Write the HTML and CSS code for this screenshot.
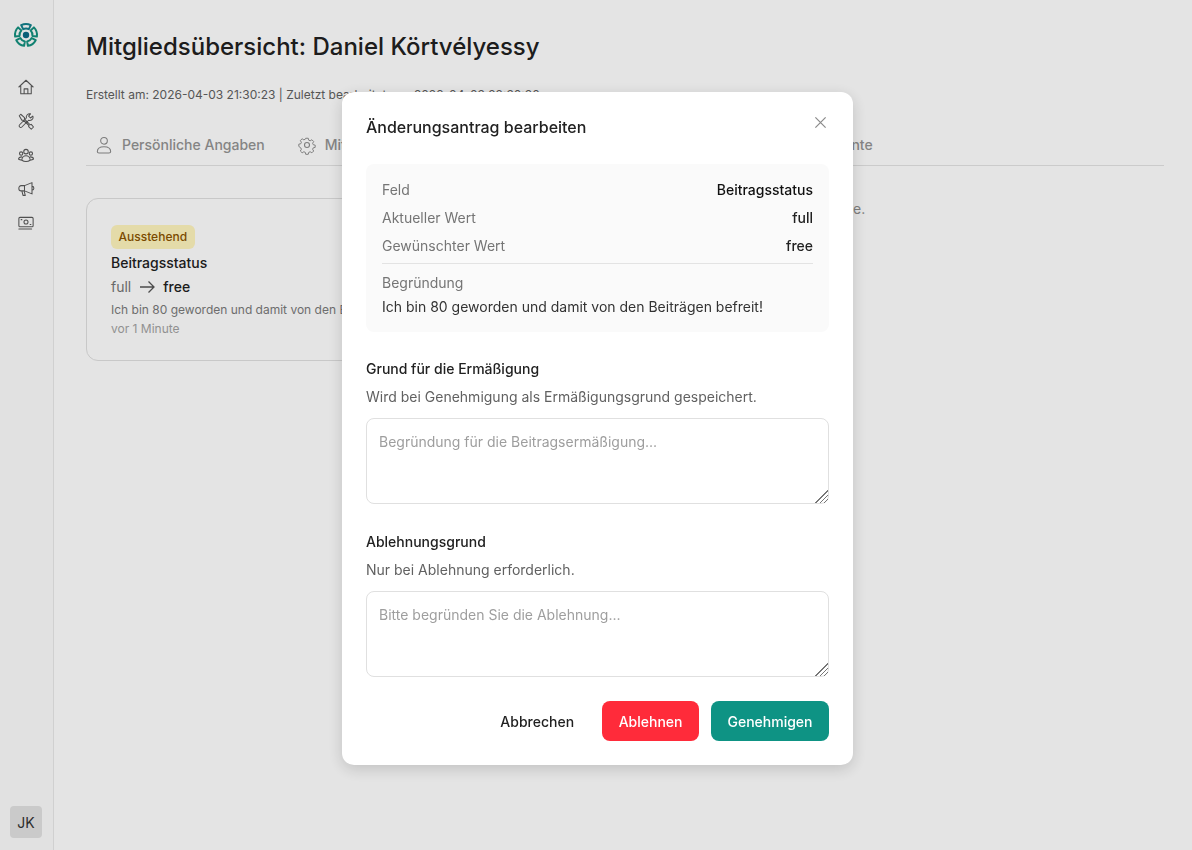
FILE: index.html
```html
<!DOCTYPE html>
<html lang="de">
    <head>
        <meta charset="utf-8">
        <title>Mitgliedsübersicht</title>
        <link rel="stylesheet" href="styles.css">
    </head>
    <body>
        <div class="app">
            <aside class="sidebar">
                <svg class="logo" width="26" height="26" viewBox="0 0 26 26" fill="none">
                    <g stroke="#14917f" stroke-width="2" stroke-linejoin="round">
                        <path stroke="#12808c" d="M8.18 3.11A11 11 0 0 1 17.820 3.110L15.850 7.160A6.500 6.500 0 0 0 10.150 7.160Z"/>
                        <path transform="rotate(72 13 13)" d="M8.18 3.11A11 11 0 0 1 17.820 3.110L15.850 7.160A6.500 6.500 0 0 0 10.150 7.160Z"/>
                        <path transform="rotate(144 13 13)" d="M8.18 3.11A11 11 0 0 1 17.820 3.110L15.850 7.160A6.500 6.500 0 0 0 10.150 7.160Z"/>
                        <path transform="rotate(216 13 13)" d="M8.18 3.11A11 11 0 0 1 17.820 3.110L15.850 7.160A6.500 6.500 0 0 0 10.150 7.160Z"/>
                        <path transform="rotate(288 13 13)" d="M8.18 3.11A11 11 0 0 1 17.820 3.110L15.850 7.160A6.500 6.500 0 0 0 10.150 7.160Z"/>
                    </g>
                    <circle cx="13" cy="13" r="3.200" fill="#0c6a86"/>
                </svg>
                <nav class="side-nav">
                    <a class="side-link" href="#">
                        <svg viewBox="0 0 24 24"><path d="M2.500 12 12 3l9.500 9M5 9.500V21h14V9.500M9.500 21v-6.500h5V21"/></svg>
                    </a>
                    <a class="side-link" href="#">
                        <svg viewBox="0 0 24 24"><path d="M3 5l2-2 5 4.500v2l7.500 7.500 1.500-.5 3 3.500-3 3-3.500-3.500.5-1.500L8.500 11h-2zM21.500 6.500a4.500 4.500 0 0 1-6 4.500L6.500 20a2 2 0 0 1-3-3L12.500 8a4.500 4.500 0 0 1 5.500-5.500L15.500 5.500l2.500 2.500 3-2.500z"/></svg>
                    </a>
                    <a class="side-link" href="#">
                        <svg viewBox="0 0 24 24"><circle cx="12" cy="7.500" r="3"/><circle cx="5.500" cy="10" r="2.200"/><circle cx="18.500" cy="10" r="2.200"/><path d="M6.500 19c0-3.500 2.500-6 5.500-6s5.500 2.500 5.500 6c-3 2-8 2-11 0zM6.500 14.500c-2.500 0-4.500 1-4.500 3 .8.800 2.500 1.300 4.500 1.300M17.500 14.500c2.500 0 4.500 1 4.500 3-.8.800-2.500 1.300-4.500 1.300"/></svg>
                    </a>
                    <a class="side-link" href="#">
                        <svg viewBox="0 0 24 24"><path d="M20 3.500v15L10 14.500H5.500a3 3 0 0 1-3-3v-1a3 3 0 0 1 3-3H10zM10 7.500v7M20 8.500a2.500 2.500 0 0 1 0 5M6.500 14.500l1.500 6h3l-1.500-6"/></svg>
                    </a>
                    <a class="side-link" href="#">
                        <svg viewBox="0 0 24 24"><rect x="2.500" y="4.500" width="19" height="12.500" rx="1.500"/><circle cx="12" cy="10.700" r="2.700"/><path d="M5.500 7.500h1M17.500 14h1M2.500 20h17"/></svg>
                    </a>
                </nav>
                <div class="avatar">JK</div>
            </aside>

            <main class="content">
                <h1 class="page-title">Mitgliedsübersicht: Daniel Körtvélyessy</h1>
                <p class="meta">Erstellt am: 2026-04-03 21:30:23 | Zuletzt bearbeitet am: 2026-04-03 22:30:30</p>

                <div class="tabs">
                    <a class="tab" href="#">
                        <svg viewBox="0 0 24 24"><circle cx="12" cy="7" r="4"/><path d="M4 20c0-4 3.500-6 8-6s8 2 8 6c0 1-1 1.500-2 1.500H6c-1 0-2-.5-2-1.500z"/></svg>
                        Persönliche Angaben
                    </a>
                    <a class="tab" href="#">
                        <svg viewBox="0 0 24 24"><circle cx="12" cy="12" r="3"/><path d="M10.300 3h3.400l.6 2.600 1.900.8 2.300-1.400 2.400 2.400-1.400 2.300.8 1.900 2.600.6v3l-2.600.6-.8 1.900 1.400 2.300-2.400 2.400-2.300-1.400-1.900.8-.6 2.600h-3.400l-.6-2.600-1.900-.8-2.300 1.400-2.400-2.400 1.400-2.300-.8-1.900L1.100 13.900v-3l2.600-.6.8-1.900L3.100 6.100l2.400-2.400 2.300 1.400 1.900-.8z" transform="translate(12 12) scale(.9) translate(-12 -12)"/></svg>
                        Mitgliedschaft
                    </a>
                    <a class="tab" href="#">
                        <svg viewBox="0 0 24 24"><rect x="3" y="6" width="18" height="13" rx="2"/><path d="M3 10h18"/></svg>
                        Zahlungen
                    </a>
                    <a class="tab" href="#">
                        <svg viewBox="0 0 24 24"><path d="M5 3h14v18H5zM9 8h6M9 12h6"/></svg>
                        Änderungsanträge
                    </a>
                    <a class="tab" href="#">
                        <svg viewBox="0 0 24 24"><path d="M6 3h8l4 4v14H6z"/></svg>
                        Dokumente
                    </a>
                </div>

                <div class="requests">
                    <section class="request-card">
                        <span class="badge">Ausstehend</span>
                        <h2 class="request-field">Beitragsstatus</h2>
                        <div class="request-change">
                            <span class="old-value">full</span>
                            <svg class="arrow" viewBox="0 0 16 16"><path d="M1 8h14M9.500 2.500 15 8l-5.500 5.500"/></svg>
                            <span>free</span>
                        </div>
                        <p class="request-reason">Ich bin 80 geworden und damit von den Beiträgen befreit!</p>
                        <p class="request-time">vor 1 Minute</p>
                    </section>
                    <p class="request-note">Keine weiteren offenen Änderungsanträge.</p>
                </div>
            </main>
        </div>

        <div class="overlay">
            <div class="modal">
                <div class="modal-head">
                    <h2 class="modal-title">Änderungsantrag bearbeiten</h2>
                    <button class="modal-close" aria-label="Schließen">
                        <svg viewBox="0 0 14 14"><path d="M1.500 1.500l11 11M12.500 1.500l-11 11"/></svg>
                    </button>
                </div>

                <div class="summary">
                    <div class="summary-row">
                        <span class="summary-label">Feld</span>
                        <span class="summary-value summary-strong">Beitragsstatus</span>
                    </div>
                    <div class="summary-row">
                        <span class="summary-label">Aktueller Wert</span>
                        <span class="summary-value">full</span>
                    </div>
                    <div class="summary-row">
                        <span class="summary-label">Gewünschter Wert</span>
                        <span class="summary-value">free</span>
                    </div>
                    <div class="summary-reason">
                        <div class="summary-label">Begründung</div>
                        <div class="summary-text">Ich bin 80 geworden und damit von den Beiträgen befreit!</div>
                    </div>
                </div>

                <div class="field">
                    <label class="field-label">Grund für die Ermäßigung</label>
                    <p class="field-hint">Wird bei Genehmigung als Ermäßigungsgrund gespeichert.</p>
                    <textarea class="field-input" placeholder="Begründung für die Beitragsermäßigung..."></textarea>
                </div>

                <div class="field">
                    <label class="field-label">Ablehnungsgrund</label>
                    <p class="field-hint">Nur bei Ablehnung erforderlich.</p>
                    <textarea class="field-input" placeholder="Bitte begründen Sie die Ablehnung..."></textarea>
                </div>

                <div class="modal-actions">
                    <button class="btn btn-plain">Abbrechen</button>
                    <button class="btn btn-danger">Ablehnen</button>
                    <button class="btn btn-primary">Genehmigen</button>
                </div>
            </div>
        </div>
    </body>
</html>
```

FILE: styles.css
```css
* {
    box-sizing: border-box;
}
html, body {
    height: 100%;
}
body {
    margin: 0;
    font-family: Inter, "Noto Sans", sans-serif;
    color: #212121;
    background-color: #fff;
    overflow: hidden;
}
p, h1, h2 {
    margin: 0;
}
a {
    text-decoration: none;
    color: inherit;
}

.app {
    display: flex;
    height: 100%;
}

/* sidebar */
.sidebar {
    width: 54px;
    flex: none;
    display: flex;
    flex-direction: column;
    align-items: center;
    padding: 22px 1px 12px 0;
    background-color: #fcfcfc;
    border-right: 1px solid #e9e9e9;
}
.logo {
    display: block;
}
.side-nav {
    display: flex;
    flex-direction: column;
    gap: 16px;
    margin-top: 30px;
}
.side-link {
    display: block;
    width: 18px;
    height: 18px;
}
.side-link svg {
    display: block;
    width: 18px;
    height: 18px;
    fill: none;
    stroke: #5a5a5a;
    stroke-width: 1.400;
    stroke-linejoin: round;
    stroke-linecap: round;
}
.avatar {
    margin-top: auto;
    width: 32px;
    height: 32px;
    display: flex;
    align-items: center;
    justify-content: center;
    border-radius: 4px;
    background-color: #e2e2e2;
    font-size: 14px;
    color: #333;
}

/* page */
.content {
    flex: 1;
    min-width: 0;
    padding: 31px 28px 0 32px;
}
.page-title {
    font-size: 24px;
    line-height: 32px;
    font-weight: 500;
}
.meta {
    margin-top: 24px;
    font-size: 12px;
    line-height: 16px;
    color: #616161;
}
.tabs {
    display: flex;
    gap: 22px;
    margin-top: 24px;
    height: 39px;
    border-bottom: 1px solid #e3e3e3;
}
.tab {
    display: flex;
    align-items: center;
    gap: 8px;
    height: 38px;
    padding: 0 2px 3px 8px;
    font-size: 14px;
    font-weight: 450;
    color: #949494;
    white-space: nowrap;
}
.tab svg {
    width: 20px;
    height: 20px;
    fill: none;
    stroke: #8c8c8c;
    stroke-width: 1.300;
    stroke-linejoin: round;
}

.requests {
    display: flex;
    gap: 33px;
    margin-top: 32px;
}
.request-card {
    width: 463px;
    height: 163px;
    flex: none;
    padding: 26px 24px;
    border: 1px solid #e0e0e0;
    border-radius: 12px;
    background-color: #fff;
}
.badge {
    display: inline-block;
    height: 24px;
    padding: 0 7.500px;
    border-radius: 6px;
    background-color: #fff5bd;
    color: #8a5300;
    font-size: 12px;
    line-height: 24px;
    font-weight: 500;
}
.request-field {
    margin-top: 4px;
    font-size: 14px;
    line-height: 20px;
    font-weight: 450;
}
.request-change {
    display: flex;
    align-items: center;
    gap: 8px;
    margin-top: 4px;
    font-size: 14px;
    line-height: 20px;
    font-weight: 450;
}
.old-value {
    color: #757575;
    font-weight: 400;
}
.arrow {
    width: 16px;
    height: 16px;
    fill: none;
    stroke: #555;
    stroke-width: 1.300;
}
.request-reason {
    margin-top: 3px;
    font-size: 12px;
    line-height: 20px;
    color: #7a7a7a;
}
.request-time {
    margin-top: -1px;
    font-size: 12px;
    line-height: 20px;
    color: #a3a3a3;
}
.request-note {
    margin-top: 1px;
    font-size: 14px;
    line-height: 20px;
    color: #8c8c8c;
    white-space: nowrap;
}

/* dialog */
.overlay {
    position: fixed;
    inset: 0;
    background-color: rgba(0, 0, 0, 0.105);
}
.modal {
    position: absolute;
    left: 342px;
    top: 92px;
    width: 511px;
    height: 673px;
    padding: 23px 24px 24px;
    border-radius: 12px;
    background-color: #fff;
    box-shadow: 0 4px 16px rgba(0, 0, 0, 0.16);
}
.modal-head {
    display: flex;
    justify-content: space-between;
    align-items: flex-start;
}
.modal-title {
    font-size: 16px;
    line-height: 24px;
    font-weight: 500;
}
.modal-close {
    width: 14px;
    height: 14px;
    margin: 0 1px 0 0;
    padding: 0;
    border: 0;
    background: none;
}
.modal-close svg {
    display: block;
    width: 13px;
    height: 13px;
    fill: none;
    stroke: #8a8a8a;
    stroke-width: 1.300;
}
.summary {
    margin-top: 25px;
    height: 168px;
    padding: 16px 16px 12px;
    border-radius: 8px;
    background-color: #fafafa;
}
.summary-row {
    display: flex;
    justify-content: space-between;
    font-size: 14px;
    line-height: 20px;
    margin-bottom: 8px;
}
.summary-label {
    font-size: 14px;
    line-height: 20px;
    color: #757575;
}
.summary-value {
    font-weight: 500;
}
.summary-strong {
    color: #111;
}
.summary-reason {
    border-top: 1px solid #e3e3e3;
    padding-top: 9px;
    margin-top: -1px;
}
.summary-text {
    margin-top: 4px;
    font-size: 14px;
    line-height: 20px;
    color: #333;
}
.field {
    margin-top: 27px;
}
.field + .field {
    margin-top: 28px;
}
.field-label {
    display: block;
    font-size: 14px;
    line-height: 20px;
    font-weight: 500;
}
.field-hint {
    margin-top: 8px;
    font-size: 14px;
    line-height: 20px;
    color: #616161;
}
.field-input {
    display: block;
    width: 100%;
    height: 86px;
    margin-top: 11px;
    padding: 13px 12px 12px;
    border: 1px solid #e0e0e0;
    border-radius: 8px;
    font-family: inherit;
    font-size: 14px;
    line-height: 20px;
    color: #212121;
    background-color: #fff;
    outline: none;
}
.field-input::placeholder {
    color: #9e9e9e;
}
.field-input::-webkit-resizer {
    background:
        linear-gradient(135deg, #fff 50%, transparent 50%),
        repeating-linear-gradient(135deg, #777 0 1px, transparent 1px 3px);
}
.modal-actions {
    display: flex;
    justify-content: flex-end;
    gap: 12px;
    margin-top: 24px;
}
.btn {
    height: 40px;
    padding: 0 16.500px;
    border: 0;
    border-radius: 8px;
    font-family: inherit;
    font-size: 14px;
    font-weight: 500;
}
.btn-plain {
    padding: 0 16px;
    background: none;
    color: #212121;
}
.btn-danger {
    background-color: #ff2b3a;
    color: #fff;
}
.btn-primary {
    background-color: #0e9384;
    color: #fff;
}
```
